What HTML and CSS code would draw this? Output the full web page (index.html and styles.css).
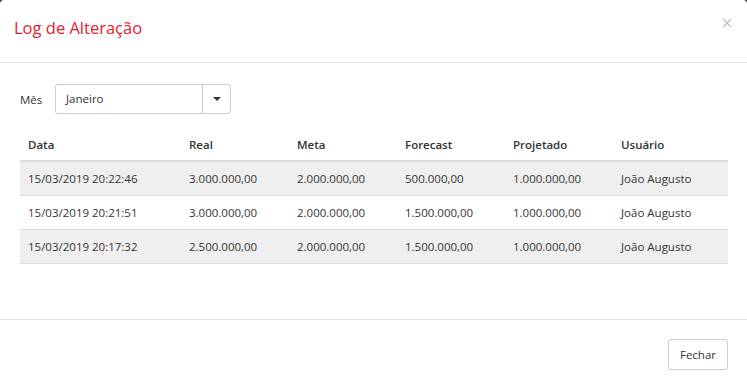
FILE: index.html
```html
<!DOCTYPE html>
<html lang="pt-BR">

<head>
  <meta charset="UTF-8">
  <meta name="viewport" content="width=device-width, initial-scale=1.0">
  <title>Log de Alteração</title>
  <link rel="stylesheet" href="styles.css">
</head>

<body>
  <div class="modal">
    <div class="modal-header">
      <h4 class="modal-title">Log de Alteração</h4>
      <button class="close" type="button">
        <svg width="10" height="10" viewBox="0 0 10 10"><path d="M1 1L9 9M9 1L1 9" stroke="#c4c4c4" stroke-width="1.6" /></svg>
      </button>
    </div>

    <div class="modal-body">
      <div class="form-row">
        <label class="month-label">Mês</label>
        <div class="select">
          <span class="select-value">Janeiro</span>
          <span class="select-arrow"><i class="caret"></i></span>
        </div>
      </div>

      <table class="log-table">
        <thead>
          <tr>
            <th class="col-data">Data</th>
            <th class="col-num">Real</th>
            <th class="col-num">Meta</th>
            <th class="col-num">Forecast</th>
            <th class="col-num">Projetado</th>
            <th>Usuário</th>
          </tr>
        </thead>
        <tbody>
          <tr>
            <td>15/03/2019 20:22:46</td>
            <td>3.000.000,00</td>
            <td>2.000.000,00</td>
            <td>500.000,00</td>
            <td>1.000.000,00</td>
            <td>João Augusto</td>
          </tr>
          <tr>
            <td>15/03/2019 20:21:51</td>
            <td>3.000.000,00</td>
            <td>2.000.000,00</td>
            <td>1.500.000,00</td>
            <td>1.000.000,00</td>
            <td>João Augusto</td>
          </tr>
          <tr>
            <td>15/03/2019 20:17:32</td>
            <td>2.500.000,00</td>
            <td>2.000.000,00</td>
            <td>1.500.000,00</td>
            <td>1.000.000,00</td>
            <td>João Augusto</td>
          </tr>
        </tbody>
      </table>
    </div>

    <div class="modal-footer">
      <button class="btn" type="button">Fechar</button>
    </div>
  </div>
</body>

</html>
```

FILE: styles.css
```css
html,
body {
  margin: 0;
  background-color: #2e2e2e;
}

body {
  font-family: "Open Sans", "Noto Sans", sans-serif;
  font-size: 11.5px;
  color: #333;
}

.modal {
  background-color: #fff;
  border-radius: 4px 4px 0 0;
  min-height: 420px;
}

.modal-header {
  display: flex;
  justify-content: space-between;
  align-items: flex-start;
  padding: 15px 15px 21px 14px;
  border-bottom: 1px solid #e3e3e3;
}

.modal-title {
  margin: 0;
  font-size: 16.5px;
  font-weight: normal;
  line-height: 26px;
  color: #e4202f;
}

.close {
  margin-top: 1px;
  padding: 0;
  border: 0;
  background: none;
}

.modal-body {
  padding: 21px 19px 55px 20px;
}

.form-row {
  display: flex;
  align-items: center;
}

.month-label {
  width: 35px;
}

.select {
  display: flex;
  width: 176px;
  height: 30px;
  box-sizing: border-box;
  border: 1px solid #ccc;
  border-radius: 3px;
}

.select-value {
  flex: 1;
  padding-left: 10px;
  line-height: 28px;
}

.select-arrow {
  display: flex;
  justify-content: center;
  align-items: center;
  width: 27px;
  border-left: 1px solid #ccc;
}

.caret {
  width: 0;
  height: 0;
  border-top: 4px solid #333;
  border-left: 4px solid transparent;
  border-right: 4px solid transparent;
}

.log-table {
  width: 100%;
  margin-top: 15px;
  border-collapse: collapse;
}

.log-table th,
.log-table td {
  padding: 0 8px;
  text-align: left;
  white-space: nowrap;
}

.log-table th {
  height: 31px;
  font-weight: 600;
  border-bottom: 2px solid #ddd;
}

.log-table td {
  height: 33px;
  border-bottom: 1px solid #ddd;
}

.log-table tbody tr:nth-child(odd) {
  background-color: #efefef;
}

.col-data {
  width: 145px;
}

.col-num {
  width: 92px;
}

.modal-footer {
  display: flex;
  justify-content: flex-end;
  padding: 19px 19px 20px;
  border-top: 1px solid #e3e3e3;
}

.btn {
  height: 31px;
  padding: 0 11px;
  font-family: inherit;
  font-size: 11.5px;
  color: #333;
  background-color: #fff;
  border: 1px solid #ccc;
  border-radius: 3px;
}
```
